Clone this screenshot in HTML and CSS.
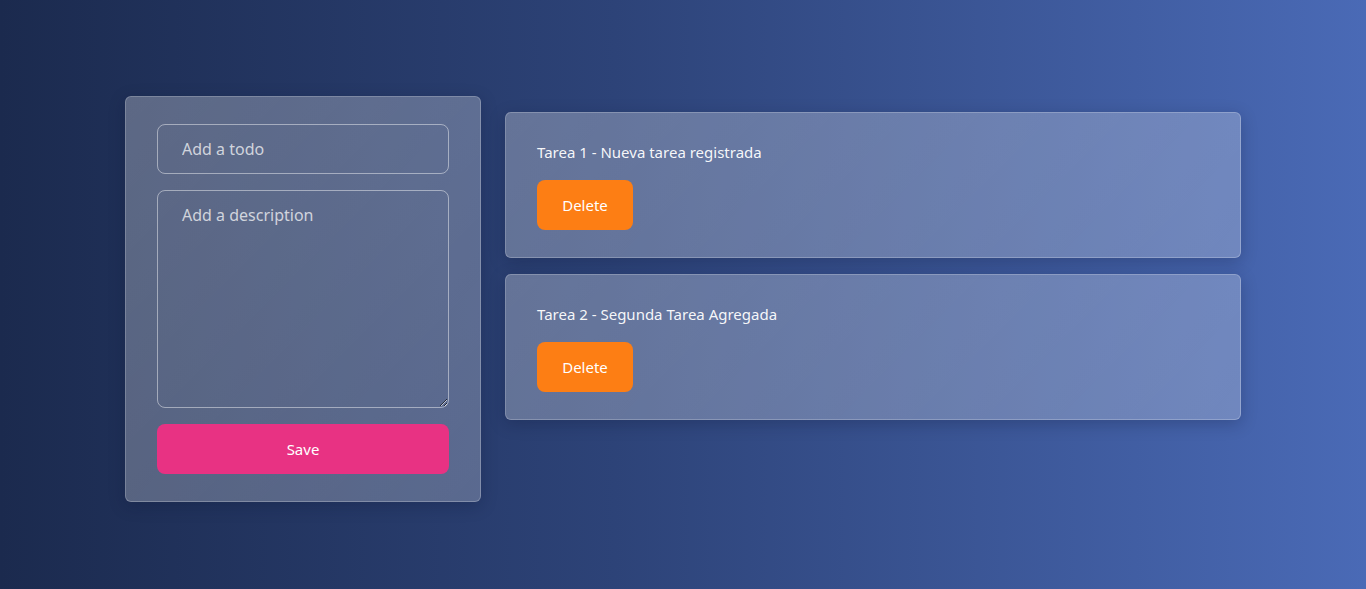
FILE: index.html
```html
<!DOCTYPE html>
<html lang="es">
<head>
<meta charset="utf-8">
<title>Todo</title>
<link rel="stylesheet" href="styles.css">
</head>
<body>
<main class="app">
  <form class="panel form">
    <input class="field" type="text" placeholder="Add a todo">
    <textarea class="field area" placeholder="Add a description"></textarea>
    <button type="button" class="btn save">Save</button>
  </form>
  <section class="list">
    <article class="panel card">
      <p class="title">Tarea 1 - Nueva tarea registrada</p>
      <button type="button" class="btn delete">Delete</button>
    </article>
    <article class="panel card">
      <p class="title">Tarea 2 - Segunda Tarea Agregada</p>
      <button type="button" class="btn delete">Delete</button>
    </article>
  </section>
</main>
</body>
</html>
```

FILE: styles.css
```css
* { box-sizing: border-box; }
html, body { margin: 0; height: 100%; }
body {
  background: linear-gradient(to right, #1b2a4e 0%, #2d4378 45%, #4a6ab6 100%);
  font-family: "Segoe UI", "Noto Sans", "Open Sans", sans-serif;
  color: #fff;
  overflow: hidden;
}
.app {
  display: flex;
  align-items: flex-start;
  gap: 24px;
  width: 1116px;
  margin: 0 auto;
  padding-top: 96px;
}
.panel {
  background: linear-gradient(135deg, rgba(255, 255, 255, 0.28), rgba(255, 255, 255, 0.23));
  border: 1px solid rgba(255, 255, 255, 0.22);
  border-radius: 6px;
  box-shadow: 0 4px 16px rgba(10, 20, 50, 0.25);
}
.form {
  width: 356px;
  height: 406px;
  padding: 27px 31px;
  display: flex;
  flex-direction: column;
  gap: 16px;
}
.field {
  display: block;
  width: 100%;
  height: 50px;
  background: transparent;
  border: 1px solid rgba(255, 255, 255, 0.45);
  border-radius: 8px;
  padding: 0 24px;
  font: 16px "Segoe UI", "Noto Sans", sans-serif;
  color: #fff;
  outline: none;
}
.field::placeholder { color: rgba(255, 255, 255, 0.72); }
.area {
  height: 218px;
  padding: 13px 24px;
  resize: vertical;
}
.btn {
  border: none;
  border-radius: 8px;
  height: 50px;
  color: #fff;
  font: 15px "Segoe UI", "Noto Sans", sans-serif;
  cursor: pointer;
}
.save { width: 100%; background: #e83283; }
.list {
  flex: 1;
  margin-top: 16px;
  display: flex;
  flex-direction: column;
  gap: 16px;
}
.card {
  height: 146px;
  padding: 27px 31px;
  display: flex;
  flex-direction: column;
  align-items: flex-start;
  gap: 16px;
}
.title {
  margin: 0;
  line-height: 24px;
  font-size: 15px;
  color: rgba(255, 255, 255, 0.95);
}
.delete { width: 96px; background: #fd7e14; }
```
